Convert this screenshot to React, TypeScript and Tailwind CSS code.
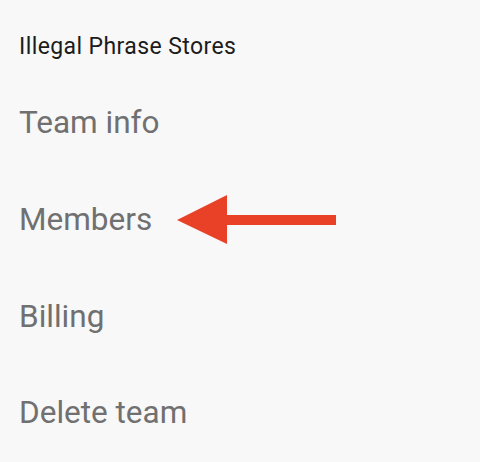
const items = ["Team info", "Members", "Billing", "Delete team"];

/** Red pointer drawn next to the highlighted menu entry. */
function Arrow() {
  return (
    <svg width="160" height="50" viewBox="0 0 160 50" className="ml-[25px] shrink-0">
      <polygon points="0,25 50,0 50,49" fill="#e94128" />
      <rect x="49" y="20" width="110" height="10" fill="#e94128" />
    </svg>
  );
}

export default function App() {
  return (
    <div
      className="h-[462px] w-[480px] overflow-hidden bg-[#f8f8f8] pl-[19px] pt-[32.5px]"
      style={{ fontFamily: "Roboto, 'Liberation Sans', sans-serif" }}
    >
      <p className="text-[23px] leading-[28.75px] tracking-[0.4px] text-[#1c1c1c]">
        Illegal Phrase Stores
      </p>
      <nav className="mt-[42px] flex flex-col gap-[56.7px]">
        {items.map((item) => (
          <div key={item} className="flex h-[40px] items-center">
            <span className="text-[31.5px] leading-[40px] text-[#707070]">{item}</span>
            {item === "Members" && <Arrow />}
          </div>
        ))}
      </nav>
    </div>
  );
}
